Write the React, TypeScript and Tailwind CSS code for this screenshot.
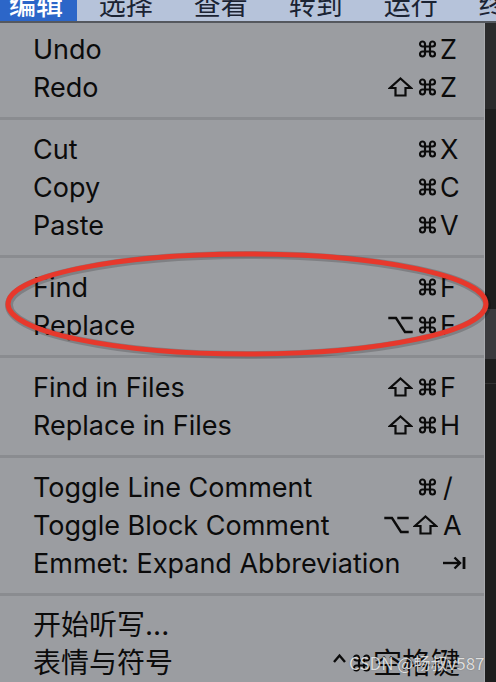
import React from 'react';

type Item = { label: string; mods?: string; key?: string; cjk?: boolean };

const sections: Item[][] = [
  [
    { label: 'Undo', mods: '⌘', key: 'Z' },
    { label: 'Redo', mods: '⇧⌘', key: 'Z' },
  ],
  [
    { label: 'Cut', mods: '⌘', key: 'X' },
    { label: 'Copy', mods: '⌘', key: 'C' },
    { label: 'Paste', mods: '⌘', key: 'V' },
  ],
  [
    { label: 'Find', mods: '⌘', key: 'F' },
    { label: 'Replace', mods: '⌥⌘', key: 'F' },
  ],
  [
    { label: 'Find in Files', mods: '⇧⌘', key: 'F' },
    { label: 'Replace in Files', mods: '⇧⌘', key: 'H' },
  ],
  [
    { label: 'Toggle Line Comment', mods: '⌘', key: '/' },
    { label: 'Toggle Block Comment', mods: '⌥⇧', key: 'A' },
    { label: 'Emmet: Expand Abbreviation', key: '⇥' },
  ],
  [
    { label: '开始听写...', cjk: true },
    { label: '表情与符号', mods: '^⌘', key: '空格键', cjk: true },
  ],
];

const menus = ['选择', '查看', '转到', '运行', '终端'];

const textFont = "font-['Inter','Noto_Sans_CJK_SC',sans-serif]";

// key symbols drawn as small icons
function Cmd() {
  return (
    <svg width="21" height="20" viewBox="0 0 24 24" fill="none" stroke="#0b0b0b" strokeWidth="2.6" strokeLinecap="round" strokeLinejoin="round">
      <path d="M15 6v12a3 3 0 1 0 3-3H6a3 3 0 1 0 3 3V6a3 3 0 1 0-3 3h12a3 3 0 1 0-3-3" />
    </svg>
  );
}

function Shift() {
  return (
    <svg width="25" height="20" viewBox="0 0 25 20" fill="none" stroke="#0b0b0b" strokeWidth="2.2" strokeLinejoin="miter">
      <path d="M12.5 1.5 L23 11 H17.5 V18.5 H7.5 V11 H2 Z" />
    </svg>
  );
}

function Opt() {
  return (
    <svg width="25" height="18" viewBox="0 0 25 18" fill="none" stroke="#0b0b0b" strokeWidth="2.4" strokeLinecap="square">
      <path d="M1.5 2 H8 L17 16 H23.5 M14.5 2 H23.5" />
    </svg>
  );
}

function Tab() {
  return (
    <svg width="24" height="14" viewBox="0 0 24 14" fill="none" stroke="#0b0b0b" strokeWidth="2.4">
      <path d="M1 7 H18" />
      <path d="M12.5 1.5 L18 7 L12.5 12.5" />
      <path d="M22 1 V13" strokeWidth="2.8" />
    </svg>
  );
}

function Caret() {
  return (
    <svg width="15" height="20" viewBox="0 0 15 20" fill="none" stroke="#0b0b0b" strokeWidth="2.4">
      <path d="M2 9 L7.5 2.5 L13 9" />
    </svg>
  );
}

function Mods({ mods }: { mods: string }) {
  return (
    <span className="flex items-center gap-[4px]">
      {Array.from(mods).map((m, i) => {
        if (m === '⌘') return <Cmd key={i} />;
        if (m === '⇧') return <Shift key={i} />;
        if (m === '⌥') return <Opt key={i} />;
        if (m === '^') return <Caret key={i} />;
        return null;
      })}
    </span>
  );
}

function Row({ item }: { item: Item }) {
  return (
    <div className="h-[38px] flex items-center pl-[33px] pr-[24px]">
      <span
        className={`${textFont} ${item.cjk ? 'text-[28px]' : 'text-[27px]'} leading-none text-[#0b0b0b] flex-1 whitespace-nowrap`}
      >
        {item.label}
      </span>
      {item.cjk && item.key ? (
        <span className="flex items-center gap-[1px]">
          <Mods mods={item.mods || ''} />
          <span className={`${textFont} text-[29px] leading-none text-[#0b0b0b]`}>{item.key}</span>
        </span>
      ) : (
        <span className="flex items-center">
          {item.mods && <Mods mods={item.mods} />}
          {item.key === '⇥' ? (
            <span className="w-[24px] flex justify-end mr-[-6px]">
              <Tab />
            </span>
          ) : (
            <span
              className={`${textFont} text-[27px] leading-none text-[#0b0b0b] w-[22px] ${
                item.key === 'A' || item.key === '/' ? 'pl-[5px]' : 'pl-[2px]'
              }`}
            >
              {item.key}
            </span>
          )}
        </span>
      )}
    </div>
  );
}

export default function App() {
  return (
    <div className="relative w-[496px] h-[682px] overflow-hidden bg-[#1e1e1e]">
      {/* menu bar, cut off at the top */}
      <div className="h-[21px] bg-[#b6c3da] flex items-start overflow-hidden">
        <div className="h-full bg-[#2c66c8] w-[83px] pl-[9px] flex items-start overflow-hidden">
          <span className="font-['Noto_Sans_CJK_SC',sans-serif] text-[27px] leading-none text-white font-medium mt-[-10px]">
            编辑
          </span>
        </div>
        <div className="flex gap-[41px] pl-[22px] items-start overflow-hidden">
          {menus.map((m) => (
            <span
              key={m}
              className="font-['Noto_Sans_CJK_SC',sans-serif] text-[27px] leading-none text-[#1b2333] mt-[-10px] whitespace-nowrap"
            >
              {m}
            </span>
          ))}
        </div>
      </div>
      <div className="h-[2px] bg-[#55585e]" />

      <div className="flex h-[659px]">
        <div className="w-[485px] bg-[#9b9da1] pt-[7px] border-r border-[#a9abaf]">
          {sections.map((sec, i) => (
            <div key={i}>
              {i > 0 && (
                <div className="h-[24px] flex items-center">
                  <div className="h-[3px] w-full bg-[#8a8c90]" />
                </div>
              )}
              {sec.map((item) => (
                <Row key={item.label} item={item} />
              ))}
            </div>
          ))}
        </div>
        <div className="flex-1 flex flex-col">
          <div className="h-[86px] bg-[#2b2b2c]" />
          <div className="h-[200px] bg-[#1e1e1e]" />
          <div className="h-[50px] bg-[#3a3a3d]" />
          <div className="h-[25px] bg-[#1e1e1e] border-b border-[#333]" />
          <div className="flex-1 bg-[#1e1e1e]" />
        </div>
      </div>

      {/* red annotation ellipse */}
      <svg className="absolute left-0 top-0 pointer-events-none" width="496" height="682">
        <ellipse cx="248" cy="305" rx="239" ry="50" fill="none" stroke="rgba(0,0,0,0.18)" strokeWidth="8" />
        <ellipse cx="247" cy="304" rx="239" ry="50" fill="none" stroke="#e7382c" strokeWidth="5" />
      </svg>

      {/* watermark */}
      <span className="absolute left-[349px] top-[654px] font-['Noto_Sans_CJK_SC',sans-serif] text-[17px] leading-none text-white/80 whitespace-nowrap [text-shadow:0_0_1px_rgba(0,0,0,0.5)]">
        CSDN @畅叔v587
      </span>
    </div>
  );
}
